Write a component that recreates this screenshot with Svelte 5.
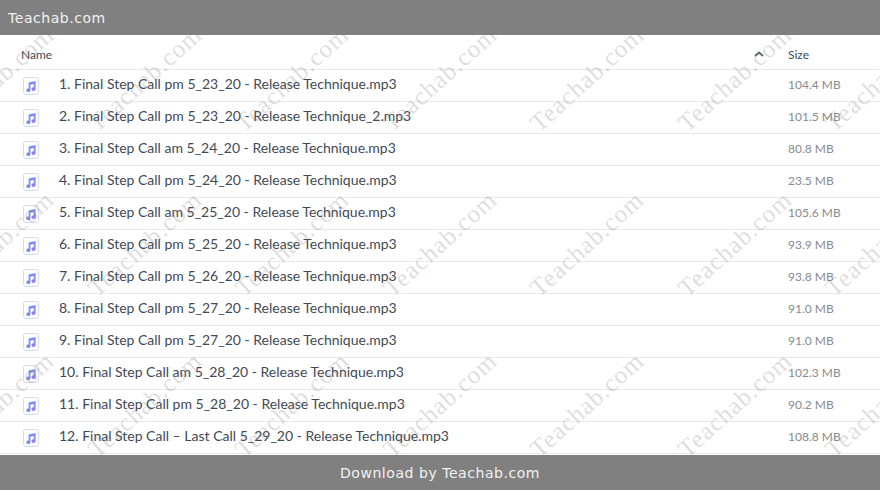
<script>
	const files = [
		['1. Final Step Call pm 5_23_20 - Release Technique.mp3', '104.4 MB'],
		['2. Final Step Call pm 5_23_20 - Release Technique_2.mp3', '101.5 MB'],
		['3. Final Step Call am 5_24_20 - Release Technique.mp3', '80.8 MB'],
		['4. Final Step Call pm 5_24_20 - Release Technique.mp3', '23.5 MB'],
		['5. Final Step Call am 5_25_20 - Release Technique.mp3', '105.6 MB'],
		['6. Final Step Call pm 5_25_20 - Release Technique.mp3', '93.9 MB'],
		['7. Final Step Call pm 5_26_20 - Release Technique.mp3', '93.8 MB'],
		['8. Final Step Call pm 5_27_20 - Release Technique.mp3', '91.0 MB'],
		['9. Final Step Call pm 5_27_20 - Release Technique.mp3', '91.0 MB'],
		['10. Final Step Call am 5_28_20 - Release Technique.mp3', '102.3 MB'],
		['11. Final Step Call pm 5_28_20 - Release Technique.mp3', '90.2 MB'],
		['12. Final Step Call – Last Call 5_29_20 - Release Technique.mp3', '108.8 MB']
	];

	// watermark tiles, centre points
	const marks = [];
	for (const y of [79, 244, 405]) {
		for (let i = 0; i < 7; i++) {
			marks.push({ x: -3 + i * 147.5, y });
		}
	}
</script>

<div class="page">
	<header class="bar top">Teachab.com</header>

	<div class="table">
		<div class="row head">
			<span class="name">Name</span>
			<svg class="sort" viewBox="0 0 10 6" width="10" height="6">
				<path d="M1 5 L5 1.5 L9 5" fill="none" stroke="#5f6a72" stroke-width="2" />
			</svg>
			<span class="size">Size</span>
		</div>
		{#each files as file}
			<div class="row">
				<svg class="icon" viewBox="0 0 16 18" width="16" height="18">
					<defs>
						<linearGradient id="note" x1="0" y1="0" x2="1" y2="1">
							<stop offset="0" stop-color="#6aa0ee" />
							<stop offset="1" stop-color="#8f78ee" />
						</linearGradient>
					</defs>
					<rect x="0.5" y="0.5" width="15" height="17" rx="2" fill="#fff" stroke="#d8d6f6" />
					<path
						d="M5.6 5.4 L12.6 4 V12 A2.1 1.8 0 1 1 10.8 10.3 V7 L7.4 7.7 V13.2 A2.1 1.8 0 1 1 5.6 11.5 Z"
						fill="url(#note)"
					/>
				</svg>
				<span class="title">{file[0]}</span>
				<span class="size muted">{file[1]}</span>
			</div>
		{/each}
	</div>

	<footer class="bar bottom">Download by Teachab.com</footer>

	<div class="marks">
		{#each marks as m}
			<span class="mark" style="left: {m.x}px; top: {m.y}px">Teachab.com</span>
		{/each}
	</div>
</div>

<style>
	:global(body) {
		margin: 0;
		background: #fff;
	}

	.page {
		position: relative;
		width: 880px;
		height: 490px;
		overflow: hidden;
		display: flex;
		flex-direction: column;
		font-family: Lato, 'Open Sans', sans-serif;
	}

	.bar {
		background: #808080;
		color: #f2f2f2;
		font-family: 'DejaVu Sans', sans-serif;
		font-size: 14px;
		letter-spacing: 0.55px;
		display: flex;
		align-items: center;
		flex: none;
	}

	.top {
		height: 35px;
		padding-left: 8px;
	}

	.bottom {
		height: 35px;
		justify-content: center;
		margin-top: auto;
	}

	.table {
		margin-top: 1px;
	}

	.row {
		height: 31px;
		border-bottom: 1px solid #e9e9e9;
		display: flex;
		align-items: center;
		padding-left: 23px;
		position: relative;
	}

	.row.head {
		box-sizing: border-box;
		height: 34px;
		padding-left: 21px;
		padding-top: 4px;
		font-size: 12px;
		color: #3f4a55;
	}

	.icon {
		flex: none;
		margin-right: 20px;
		margin-top: 1px;
	}

	.title {
		font-size: 14px;
		color: #3f4a55;
		position: relative;
		top: -2px;
	}

	.name {
		flex: 1;
	}

	.sort {
		position: absolute;
		left: 754px;
		top: 15px;
	}

	.size {
		position: absolute;
		left: 788px;
	}

	.muted {
		font-size: 12px;
		color: #888b90;
		top: 7px;
	}

	.marks {
		position: absolute;
		inset: 0;
		pointer-events: none;
	}

	.mark {
		position: absolute;
		font-family: 'Liberation Serif', serif;
		font-size: 25px;
		letter-spacing: 1px;
		color: rgba(120, 120, 120, 0.25);
		white-space: nowrap;
		transform: translate(-50%, -50%) rotate(-42deg);
	}
</style>
